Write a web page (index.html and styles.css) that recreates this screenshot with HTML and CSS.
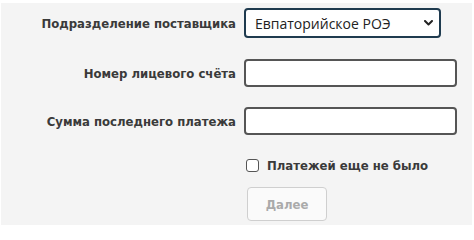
FILE: index.html
```html
<!DOCTYPE html>
<html lang="ru">
<head>
<meta charset="utf-8">
<link rel="stylesheet" href="styles.css">
</head>
<body>
<div class="panel">
  <form class="form">
    <div class="row row-select">
      <label class="label">Подразделение поставщика</label>
      <div class="select">
        <span class="select-text">Евпаторийское РОЭ</span>
        <svg class="chevron" width="9" height="6" viewBox="0 0 9 6"><path d="M1 1 L4.5 4.5 L8 1" fill="none" stroke="#222" stroke-width="2" stroke-linecap="round" stroke-linejoin="round"/></svg>
      </div>
    </div>
    <div class="row row-input">
      <label class="label">Номер лицевого счёта</label>
      <div class="input"></div>
    </div>
    <div class="row row-input row-gap20">
      <label class="label">Сумма последнего платежа</label>
      <div class="input"></div>
    </div>
    <div class="row row-check">
      <span></span>
      <label class="check-label"><span class="checkbox"></span><span>Платежей еще не было</span></label>
    </div>
    <div class="row row-button">
      <span></span>
      <button type="button" class="button" disabled>Далее</button>
    </div>
  </form>
</div>
</body>
</html>
```
FILE: styles.css
```css
html, body {
  margin: 0;
  padding: 0;
  background: #ffffff;
}
body {
  width: 474px;
  height: 227px;
  overflow: hidden;
}
.panel {
  margin: 3px 2px 0 1px;
  height: 222px;
  background: #f4f4f4;
  box-sizing: border-box;
  padding-top: 5px;
}
.form {
  margin: 0;
}
.row {
  display: grid;
  grid-template-columns: 235px 1fr;
  column-gap: 8px;
  align-items: center;
}
.label {
  text-align: right;
  font-family: "DejaVu Sans Condensed", "DejaVu Sans", Verdana, sans-serif;
  font-weight: bold;
  font-size: 13px;
  color: #3a3a3a;
  white-space: nowrap;
}
.row-select {
  height: 30px;
}
.select {
  box-sizing: border-box;
  width: 197px;
  height: 30px;
  border: 2px solid #1f3b4f;
  border-radius: 4px;
  background: #ffffff;
  display: flex;
  align-items: center;
  justify-content: space-between;
  padding: 0 6px 0 9px;
}
.select-text {
  font-family: "Open Sans", "Noto Sans", sans-serif;
  font-size: 14px;
  color: #222;
  white-space: nowrap;
}
.chevron {
  display: block;
}
.row-input {
  height: 28px;
  margin-top: 21px;
}
.row-gap20 {
  margin-top: 20px;
}
.input {
  box-sizing: border-box;
  width: 213px;
  height: 28px;
  border: 2px solid #555555;
  border-radius: 4px;
  background: #ffffff;
}
.row-check {
  height: 20px;
  margin-top: 20px;
}
.check-label {
  display: flex;
  align-items: center;
  gap: 8px;
  padding-left: 2px;
  font-family: "DejaVu Sans Condensed", "DejaVu Sans", Verdana, sans-serif;
  font-weight: bold;
  font-size: 13px;
  color: #3a3a3a;
  white-space: nowrap;
}
.checkbox {
  box-sizing: border-box;
  width: 13px;
  height: 13px;
  border: 1.5px solid #555;
  border-radius: 3px;
  background: #fff;
}
.row-button {
  margin-top: 12px;
}
.button {
  box-sizing: border-box;
  margin-left: 3px;
  width: 80px;
  height: 34px;
  border: 1px solid #cfcfcf;
  border-radius: 4px;
  background: #fafafa;
  color: #aaaaaa;
  font-family: "DejaVu Sans Condensed", "DejaVu Sans", Verdana, sans-serif;
  font-weight: bold;
  font-size: 13px;
  padding: 0;
}
```
